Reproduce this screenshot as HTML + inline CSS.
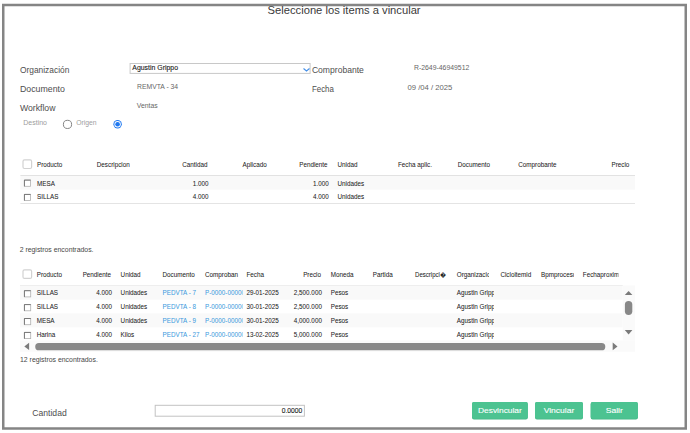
<!DOCTYPE html>
<html><head><meta charset="utf-8"><style>
html,body{margin:0;padding:0;background:#fff;width:690px;height:433px;overflow:hidden}
svg{display:block;font-family:"Liberation Sans",sans-serif}
</style></head><body>
<svg width="690" height="433" viewBox="0 0 690 433">
<defs><clipPath id="cComp"><rect x="200" y="260" width="42.8" height="90"/></clipPath><clipPath id="cOrgH"><rect x="450" y="260" width="39" height="25"/></clipPath><clipPath id="cOrg"><rect x="450" y="280" width="44.1" height="70"/></clipPath><clipPath id="cBpm"><rect x="535" y="260" width="39" height="25"/></clipPath><clipPath id="cFec"><rect x="578" y="260" width="40.5" height="25"/></clipPath></defs>
<rect x="3.25" y="5" width="682.5" height="423.5" fill="none" stroke="#858585" stroke-width="2.5"/>
<text x="267.6" y="14.1" font-size="10.2" fill="#3a3a3a" textLength="153" lengthAdjust="spacingAndGlyphs">Seleccione los items a vincular</text>
<text x="19.9" y="73" font-size="8.5" fill="#4e4e4e" textLength="49.5" lengthAdjust="spacingAndGlyphs">Organización</text>
<text x="19.9" y="91.9" font-size="8.5" fill="#4e4e4e" textLength="45" lengthAdjust="spacingAndGlyphs">Documento</text>
<text x="19.9" y="110.8" font-size="8.5" fill="#4e4e4e" textLength="35.6" lengthAdjust="spacingAndGlyphs">Workflow</text>
<text x="311.9" y="72.7" font-size="8.5" fill="#4e4e4e" textLength="52" lengthAdjust="spacingAndGlyphs">Comprobante</text>
<text x="311.9" y="91.5" font-size="8.5" fill="#4e4e4e" textLength="22" lengthAdjust="spacingAndGlyphs">Fecha</text>
<text x="32.3" y="416" font-size="8.5" fill="#4e4e4e" textLength="34.4" lengthAdjust="spacingAndGlyphs">Cantidad</text>
<rect x="130.1" y="63.5" width="180" height="9.9" fill="#fff" stroke="#c8c8c8" stroke-width="1"/>
<text x="132.3" y="70.2" font-size="7" fill="#151515" textLength="45.7" lengthAdjust="spacingAndGlyphs" stroke="#151515" stroke-width="0.1">Agustin Grippo</text>
<polyline points="303.5,68.5 306.5,70.9 309.5,68.5" fill="none" stroke="#4690e8" stroke-width="1.15"/>
<text x="137.1" y="89.0" font-size="6.8" fill="#666" textLength="41" lengthAdjust="spacingAndGlyphs">REMVTA - 34</text>
<text x="136.7" y="107.5" font-size="6.8" fill="#666" textLength="21" lengthAdjust="spacingAndGlyphs">Ventas</text>
<text x="414" y="70" font-size="6.9" fill="#666" textLength="55.3" lengthAdjust="spacingAndGlyphs">R-2649-46949512</text>
<text x="407.5" y="90.2" font-size="7.2" fill="#666" textLength="44.7" lengthAdjust="spacingAndGlyphs">09 /04 / 2025</text>
<text x="23.3" y="125.1" font-size="7" fill="#9c9c9c" textLength="23.7" lengthAdjust="spacingAndGlyphs">Destino</text>
<circle cx="67.5" cy="124.4" r="4.1" fill="#fff" stroke="#777" stroke-width="0.9"/>
<text x="76.2" y="125.1" font-size="6.8" fill="#a0a0a0" textLength="20.4" lengthAdjust="spacingAndGlyphs">Origen</text>
<circle cx="117.6" cy="124.3" r="4.2" fill="#1f78f0"/>
<circle cx="117.6" cy="124.3" r="3.2" fill="#fff"/>
<circle cx="117.6" cy="124.3" r="2.3" fill="#1f78f0"/>
<rect x="23" y="159.9" width="8.6" height="8.6" fill="#fff" stroke="#d2d2d2" stroke-width="1.2" rx="1.5"/>
<text x="37" y="166.6" font-size="6.4" fill="#222" textLength="25.22" lengthAdjust="spacingAndGlyphs" stroke="#222" stroke-width="0.04">Producto</text>
<text x="96.8" y="166.6" font-size="6.4" fill="#222" textLength="32.91" lengthAdjust="spacingAndGlyphs" stroke="#222" stroke-width="0.04">Descripcion</text>
<text x="207.5" y="166.6" font-size="6.4" fill="#222" text-anchor="end" textLength="25.22" lengthAdjust="spacingAndGlyphs" stroke="#222" stroke-width="0.04">Cantidad</text>
<text x="242.5" y="166.6" font-size="6.4" fill="#222" textLength="24.17" lengthAdjust="spacingAndGlyphs" stroke="#222" stroke-width="0.04">Aplicado</text>
<text x="327.6" y="166.6" font-size="6.4" fill="#222" text-anchor="end" textLength="28.37" lengthAdjust="spacingAndGlyphs" stroke="#222" stroke-width="0.04">Pendiente</text>
<text x="337.5" y="166.6" font-size="6.4" fill="#222" textLength="19.96" lengthAdjust="spacingAndGlyphs" stroke="#222" stroke-width="0.04">Unidad</text>
<text x="398" y="166.6" font-size="6.4" fill="#222" textLength="33.97" lengthAdjust="spacingAndGlyphs" stroke="#222" stroke-width="0.04">Fecha aplic.</text>
<text x="457.7" y="166.6" font-size="6.4" fill="#222" textLength="32.22" lengthAdjust="spacingAndGlyphs" stroke="#222" stroke-width="0.04">Documento</text>
<text x="518.3" y="166.6" font-size="6.4" fill="#222" textLength="38.17" lengthAdjust="spacingAndGlyphs" stroke="#222" stroke-width="0.04">Comprobante</text>
<text x="629.3" y="166.6" font-size="6.4" fill="#222" text-anchor="end" textLength="17.86" lengthAdjust="spacingAndGlyphs" stroke="#222" stroke-width="0.04">Precio</text>
<rect x="20.4" y="175" width="614.6" height="1" fill="#e2e2e2"/>
<rect x="20.4" y="176" width="614.6" height="13.6" fill="#f9f9f9"/>
<rect x="20.4" y="203" width="614.6" height="1" fill="#e4e4e4"/>
<rect x="24.4" y="180.1" width="6.2" height="6.2" fill="#fff" stroke="#b0b0b0" stroke-width="0.8"/>
<polyline points="24.4,186.29999999999998 24.4,180.1 30.599999999999998,180.1" fill="none" stroke="#666" stroke-width="0.8"/>
<text x="37" y="185.7" font-size="6.4" fill="#222" textLength="17.85" lengthAdjust="spacingAndGlyphs" stroke="#222" stroke-width="0.04">MESA</text>
<text x="208.6" y="185.7" font-size="6.4" fill="#222" text-anchor="end" textLength="15.77" lengthAdjust="spacingAndGlyphs" stroke="#222" stroke-width="0.04">1.000</text>
<text x="328.8" y="185.7" font-size="6.4" fill="#222" text-anchor="end" textLength="15.77" lengthAdjust="spacingAndGlyphs" stroke="#222" stroke-width="0.04">1.000</text>
<text x="337.5" y="185.7" font-size="6.4" fill="#222" textLength="26.62" lengthAdjust="spacingAndGlyphs" stroke="#222" stroke-width="0.04">Unidades</text>
<rect x="24.4" y="194.4" width="6.2" height="6.2" fill="#fff" stroke="#b0b0b0" stroke-width="0.8"/>
<polyline points="24.4,200.6 24.4,194.4 30.599999999999998,194.4" fill="none" stroke="#666" stroke-width="0.8"/>
<text x="37" y="199.2" font-size="6.4" fill="#222" textLength="21.36" lengthAdjust="spacingAndGlyphs" stroke="#222" stroke-width="0.04">SILLAS</text>
<text x="208.6" y="199.2" font-size="6.4" fill="#222" text-anchor="end" textLength="15.77" lengthAdjust="spacingAndGlyphs" stroke="#222" stroke-width="0.04">4.000</text>
<text x="328.8" y="199.2" font-size="6.4" fill="#222" text-anchor="end" textLength="15.77" lengthAdjust="spacingAndGlyphs" stroke="#222" stroke-width="0.04">4.000</text>
<text x="337.5" y="199.2" font-size="6.4" fill="#222" textLength="26.62" lengthAdjust="spacingAndGlyphs" stroke="#222" stroke-width="0.04">Unidades</text>
<text x="19.7" y="251.8" font-size="6.8" fill="#474747" textLength="73.8" lengthAdjust="spacingAndGlyphs">2 registros encontrados.</text>
<rect x="23" y="269.8" width="8.6" height="8.6" fill="#fff" stroke="#d2d2d2" stroke-width="1.2" rx="1.5"/>
<text x="36.7" y="277.2" font-size="6.4" fill="#222" textLength="25.22" lengthAdjust="spacingAndGlyphs" stroke="#222" stroke-width="0.04">Producto</text>
<text x="111" y="277.2" font-size="6.4" fill="#222" text-anchor="end" textLength="28.37" lengthAdjust="spacingAndGlyphs" stroke="#222" stroke-width="0.04">Pendiente</text>
<text x="120.6" y="277.2" font-size="6.4" fill="#222" textLength="19.96" lengthAdjust="spacingAndGlyphs" stroke="#222" stroke-width="0.04">Unidad</text>
<text x="162.5" y="277.2" font-size="6.4" fill="#222" textLength="32.22" lengthAdjust="spacingAndGlyphs" stroke="#222" stroke-width="0.04">Documento</text>
<text x="205" y="277.2" font-size="6.4" fill="#222" textLength="32.92" lengthAdjust="spacingAndGlyphs" stroke="#222" stroke-width="0.04" clip-path="url(#cComp)">Comproban</text>
<text x="246.5" y="277.2" font-size="6.4" fill="#222" textLength="17.51" lengthAdjust="spacingAndGlyphs" stroke="#222" stroke-width="0.04">Fecha</text>
<text x="321" y="277.2" font-size="6.4" fill="#222" text-anchor="end" textLength="17.86" lengthAdjust="spacingAndGlyphs" stroke="#222" stroke-width="0.04">Precio</text>
<text x="330.7" y="277.2" font-size="6.4" fill="#222" textLength="22.77" lengthAdjust="spacingAndGlyphs" stroke="#222" stroke-width="0.04">Moneda</text>
<text x="372.8" y="277.2" font-size="6.4" fill="#222" textLength="19.96" lengthAdjust="spacingAndGlyphs" stroke="#222" stroke-width="0.04">Partida</text>
<text x="415" y="277.2" font-size="6.4" fill="#222" textLength="30.63" lengthAdjust="spacingAndGlyphs" stroke="#222" stroke-width="0.04">Descripci�</text>
<text x="456.8" y="277.2" font-size="6.4" fill="#222" textLength="37.12" lengthAdjust="spacingAndGlyphs" stroke="#222" stroke-width="0.04" clip-path="url(#cOrgH)">Organizacion</text>
<text x="500.4" y="277.2" font-size="6.4" fill="#222" textLength="30.81" lengthAdjust="spacingAndGlyphs" stroke="#222" stroke-width="0.04">Cicloitemid</text>
<text x="541" y="277.2" font-size="6.4" fill="#222" textLength="38.52" lengthAdjust="spacingAndGlyphs" stroke="#222" stroke-width="0.04" clip-path="url(#cBpm)">Bpmprocesos</text>
<text x="582.8" y="277.2" font-size="6.4" fill="#222" textLength="39.92" lengthAdjust="spacingAndGlyphs" stroke="#222" stroke-width="0.04" clip-path="url(#cFec)">Fechaproximo</text>
<rect x="20" y="285" width="602.7" height="0.9" fill="#e0e0e0"/>
<rect x="20" y="285.5" width="602.7" height="14.1" fill="#f9f9f9"/>
<rect x="24.4" y="290.7" width="6.3" height="6.2" fill="#fff" stroke="#b0b0b0" stroke-width="0.8"/>
<polyline points="24.4,296.9 24.4,290.7 30.7,290.7" fill="none" stroke="#666" stroke-width="0.8"/>
<text x="36.7" y="295.3" font-size="6.4" fill="#222" textLength="21.36" lengthAdjust="spacingAndGlyphs" stroke="#222" stroke-width="0.04">SILLAS</text>
<text x="112" y="295.3" font-size="6.4" fill="#222" text-anchor="end" textLength="15.77" lengthAdjust="spacingAndGlyphs" stroke="#222" stroke-width="0.04">4.000</text>
<text x="120.6" y="295.3" font-size="6.4" fill="#222" textLength="26.62" lengthAdjust="spacingAndGlyphs" stroke="#222" stroke-width="0.04">Unidades</text>
<text x="162.5" y="295.3" font-size="6.4" fill="#3d9be0" textLength="33.49" lengthAdjust="spacingAndGlyphs" stroke="#3d9be0" stroke-width="0.04">PEDVTA - 7</text>
<text x="205" y="295.3" font-size="6.4" fill="#3d9be0" textLength="50.44" lengthAdjust="spacingAndGlyphs" stroke="#3d9be0" stroke-width="0.04" clip-path="url(#cComp)">P-0000-00000001</text>
<text x="246.5" y="295.3" font-size="6.4" fill="#222" textLength="32.23" lengthAdjust="spacingAndGlyphs" stroke="#222" stroke-width="0.04">29-01-2025</text>
<text x="321.9" y="295.3" font-size="6.4" fill="#222" text-anchor="end" textLength="28.03" lengthAdjust="spacingAndGlyphs" stroke="#222" stroke-width="0.04">2,500.000</text>
<text x="330.7" y="295.3" font-size="6.4" fill="#222" textLength="17.51" lengthAdjust="spacingAndGlyphs" stroke="#222" stroke-width="0.04">Pesos</text>
<text x="456.8" y="295.3" font-size="6.4" fill="#222" textLength="41.67" lengthAdjust="spacingAndGlyphs" stroke="#222" stroke-width="0.04" clip-path="url(#cOrg)">Agustin Grippo</text>
<rect x="24.4" y="304.59999999999997" width="6.3" height="6.2" fill="#fff" stroke="#b0b0b0" stroke-width="0.8"/>
<polyline points="24.4,310.79999999999995 24.4,304.59999999999997 30.7,304.59999999999997" fill="none" stroke="#666" stroke-width="0.8"/>
<text x="36.7" y="309.2" font-size="6.4" fill="#222" textLength="21.36" lengthAdjust="spacingAndGlyphs" stroke="#222" stroke-width="0.04">SILLAS</text>
<text x="112" y="309.2" font-size="6.4" fill="#222" text-anchor="end" textLength="15.77" lengthAdjust="spacingAndGlyphs" stroke="#222" stroke-width="0.04">4.000</text>
<text x="120.6" y="309.2" font-size="6.4" fill="#222" textLength="26.62" lengthAdjust="spacingAndGlyphs" stroke="#222" stroke-width="0.04">Unidades</text>
<text x="162.5" y="309.2" font-size="6.4" fill="#3d9be0" textLength="33.49" lengthAdjust="spacingAndGlyphs" stroke="#3d9be0" stroke-width="0.04">PEDVTA - 8</text>
<text x="205" y="309.2" font-size="6.4" fill="#3d9be0" textLength="50.44" lengthAdjust="spacingAndGlyphs" stroke="#3d9be0" stroke-width="0.04" clip-path="url(#cComp)">P-0000-00000001</text>
<text x="246.5" y="309.2" font-size="6.4" fill="#222" textLength="32.23" lengthAdjust="spacingAndGlyphs" stroke="#222" stroke-width="0.04">30-01-2025</text>
<text x="321.9" y="309.2" font-size="6.4" fill="#222" text-anchor="end" textLength="28.03" lengthAdjust="spacingAndGlyphs" stroke="#222" stroke-width="0.04">2,500.000</text>
<text x="330.7" y="309.2" font-size="6.4" fill="#222" textLength="17.51" lengthAdjust="spacingAndGlyphs" stroke="#222" stroke-width="0.04">Pesos</text>
<text x="456.8" y="309.2" font-size="6.4" fill="#222" textLength="41.67" lengthAdjust="spacingAndGlyphs" stroke="#222" stroke-width="0.04" clip-path="url(#cOrg)">Agustin Grippo</text>
<rect x="20" y="313.3" width="602.7" height="14.1" fill="#f9f9f9"/>
<rect x="24.4" y="318.5" width="6.3" height="6.2" fill="#fff" stroke="#b0b0b0" stroke-width="0.8"/>
<polyline points="24.4,324.7 24.4,318.5 30.7,318.5" fill="none" stroke="#666" stroke-width="0.8"/>
<text x="36.7" y="323.1" font-size="6.4" fill="#222" textLength="17.85" lengthAdjust="spacingAndGlyphs" stroke="#222" stroke-width="0.04">MESA</text>
<text x="112" y="323.1" font-size="6.4" fill="#222" text-anchor="end" textLength="15.77" lengthAdjust="spacingAndGlyphs" stroke="#222" stroke-width="0.04">4.000</text>
<text x="120.6" y="323.1" font-size="6.4" fill="#222" textLength="26.62" lengthAdjust="spacingAndGlyphs" stroke="#222" stroke-width="0.04">Unidades</text>
<text x="162.5" y="323.1" font-size="6.4" fill="#3d9be0" textLength="33.49" lengthAdjust="spacingAndGlyphs" stroke="#3d9be0" stroke-width="0.04">PEDVTA - 9</text>
<text x="205" y="323.1" font-size="6.4" fill="#3d9be0" textLength="50.44" lengthAdjust="spacingAndGlyphs" stroke="#3d9be0" stroke-width="0.04" clip-path="url(#cComp)">P-0000-00000001</text>
<text x="246.5" y="323.1" font-size="6.4" fill="#222" textLength="32.23" lengthAdjust="spacingAndGlyphs" stroke="#222" stroke-width="0.04">30-01-2025</text>
<text x="321.9" y="323.1" font-size="6.4" fill="#222" text-anchor="end" textLength="28.03" lengthAdjust="spacingAndGlyphs" stroke="#222" stroke-width="0.04">4,000.000</text>
<text x="330.7" y="323.1" font-size="6.4" fill="#222" textLength="17.51" lengthAdjust="spacingAndGlyphs" stroke="#222" stroke-width="0.04">Pesos</text>
<text x="456.8" y="323.1" font-size="6.4" fill="#222" textLength="41.67" lengthAdjust="spacingAndGlyphs" stroke="#222" stroke-width="0.04" clip-path="url(#cOrg)">Agustin Grippo</text>
<rect x="24.4" y="332.4" width="6.3" height="6.2" fill="#fff" stroke="#b0b0b0" stroke-width="0.8"/>
<polyline points="24.4,338.59999999999997 24.4,332.4 30.7,332.4" fill="none" stroke="#666" stroke-width="0.8"/>
<text x="36.7" y="337.0" font-size="6.4" fill="#222" textLength="18.56" lengthAdjust="spacingAndGlyphs" stroke="#222" stroke-width="0.04">Harina</text>
<text x="112" y="337.0" font-size="6.4" fill="#222" text-anchor="end" textLength="15.77" lengthAdjust="spacingAndGlyphs" stroke="#222" stroke-width="0.04">4.000</text>
<text x="120.6" y="337.0" font-size="6.4" fill="#222" textLength="13.66" lengthAdjust="spacingAndGlyphs" stroke="#222" stroke-width="0.04">Kilos</text>
<text x="162.5" y="337.0" font-size="6.4" fill="#3d9be0" textLength="37.00" lengthAdjust="spacingAndGlyphs" stroke="#3d9be0" stroke-width="0.04">PEDVTA - 27</text>
<text x="205" y="337.0" font-size="6.4" fill="#3d9be0" textLength="50.44" lengthAdjust="spacingAndGlyphs" stroke="#3d9be0" stroke-width="0.04" clip-path="url(#cComp)">P-0000-00000001</text>
<text x="246.5" y="337.0" font-size="6.4" fill="#222" textLength="32.23" lengthAdjust="spacingAndGlyphs" stroke="#222" stroke-width="0.04">13-02-2025</text>
<text x="321.9" y="337.0" font-size="6.4" fill="#222" text-anchor="end" textLength="28.03" lengthAdjust="spacingAndGlyphs" stroke="#222" stroke-width="0.04">5,000.000</text>
<text x="330.7" y="337.0" font-size="6.4" fill="#222" textLength="17.51" lengthAdjust="spacingAndGlyphs" stroke="#222" stroke-width="0.04">Pesos</text>
<text x="456.8" y="337.0" font-size="6.4" fill="#222" textLength="41.67" lengthAdjust="spacingAndGlyphs" stroke="#222" stroke-width="0.04" clip-path="url(#cOrg)">Agustin Grippo</text>
<rect x="622.7" y="285.5" width="12.3" height="55" fill="#fafafa"/>
<polygon points="624.8,295 632.4,295 628.6,291.1" fill="#7a7a7a"/>
<rect x="624.9" y="300.9" width="7.4" height="14" fill="#888" rx="3.7"/>
<polygon points="624.8,330 632.4,330 628.6,334.4" fill="#7a7a7a"/>
<rect x="20" y="340.5" width="615" height="11.3" fill="#fafafa"/>
<polygon points="29.1,342.8 29.1,350 24.3,346.4" fill="#7a7a7a"/>
<rect x="35.2" y="343" width="570.1" height="7.3" fill="#888" rx="3.65"/>
<polygon points="612.7,342.6 612.7,350.3 617.5,346.45" fill="#7a7a7a"/>
<text x="20" y="361.7" font-size="6.8" fill="#474747" textLength="77.8" lengthAdjust="spacingAndGlyphs">12 registros encontrados.</text>
<rect x="155.2" y="405.3" width="149.2" height="10.9" fill="#fff" stroke="#c2c2c2" stroke-width="1"/>
<text x="302.3" y="412.9" font-size="6.7" fill="#111" text-anchor="end" textLength="20.6" lengthAdjust="spacingAndGlyphs" stroke="#111" stroke-width="0.08">0.0000</text>
<rect x="472" y="402" width="55.799999999999955" height="17.5" fill="#45b585" rx="2"/>
<rect x="472" y="402" width="55.799999999999955" height="16.8" fill="#4cc391" rx="2"/>
<text x="499.9" y="412.8" font-size="7.6" fill="#fff" text-anchor="middle" textLength="43.8" lengthAdjust="spacingAndGlyphs" stroke="#fff" stroke-width="0.1">Desvincular</text>
<rect x="535" y="402" width="48" height="17.5" fill="#45b585" rx="2"/>
<rect x="535" y="402" width="48" height="16.8" fill="#4cc391" rx="2"/>
<text x="559.0" y="412.8" font-size="7.6" fill="#fff" text-anchor="middle" textLength="30.6" lengthAdjust="spacingAndGlyphs" stroke="#fff" stroke-width="0.1">Vincular</text>
<rect x="590.7" y="402" width="47.19999999999993" height="17.5" fill="#45b585" rx="2"/>
<rect x="590.7" y="402" width="47.19999999999993" height="16.8" fill="#4cc391" rx="2"/>
<text x="614.3" y="412.8" font-size="7.6" fill="#fff" text-anchor="middle" textLength="17.2" lengthAdjust="spacingAndGlyphs" stroke="#fff" stroke-width="0.1">Salir</text>
</svg>
</body></html>
